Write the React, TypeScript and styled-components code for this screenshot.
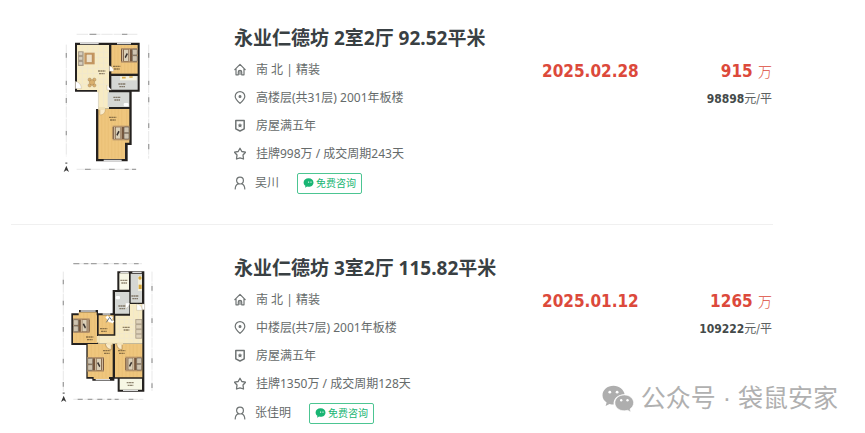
import React from "react";
import styled, { createGlobalStyle } from "styled-components";

const sans = `"Noto Sans", "Noto Sans CJK SC", sans-serif`;
const numeric = `"DejaVu Sans Condensed", "DejaVu Sans", "Noto Sans CJK SC", sans-serif`;

const GlobalStyle = createGlobalStyle`
  * { box-sizing: border-box; }
  body { margin: 0; background: #fff; font-family: ${sans}; color: #666b6b; }
  h2, p, ul { margin: 0; padding: 0; }
`;

const Page = styled.main`
  position: relative;
  padding: 0 92px 0 11px;
`;

const Listing = styled.article`
  display: grid;
  grid-template-columns: 223px minmax(0, 1fr) 110px 121px;
  padding: 20px 0 26px;
  & + & {
    border-top: 1px solid #f0f0f0;
    padding: 25px 0 0;
  }
`;

const PlanLink = styled.a`
  display: block;
  padding-left: 39px;
  svg { display: block; width: 120px; height: 165px; }
`;

const Title = styled.h2`
  margin-top: 4px;
  font-size: 19px;
  line-height: 28px;
  font-weight: 700;
  color: #394043;
  white-space: nowrap;
`;

const Facts = styled.ul`
  list-style: none;
  margin-top: 4px;
`;

const Fact = styled.li`
  display: flex;
  align-items: center;
  gap: 10px;
  height: 28px;
  font-size: 12px;
  line-height: 28px;
  white-space: nowrap;
  svg { flex: none; width: 12px; height: 14px; }
`;

const AgentRow = styled(Fact)`
  height: 30px;
  gap: 9px;
`;

const AskButton = styled.button`
  display: flex;
  align-items: center;
  gap: 2px;
  height: 21px;
  margin-left: 9px;
  padding: 0 5px;
  border: 1px solid #4cc592;
  border-radius: 2px;
  background: #fff;
  color: #18b573;
  font-family: ${sans};
  font-size: 10px;
  line-height: 18px;
  cursor: pointer;
  svg { width: 11px; height: 11px; }
`;

const DealDate = styled.p`
  margin-top: 38px;
  font-family: ${numeric};
  font-size: 17px;
  line-height: 26px;
  font-weight: 700;
  color: #dc493b;
`;

const PriceColumn = styled.div`
  margin-top: 38px;
  padding-right: 1px;
  text-align: right;
  white-space: nowrap;
`;

const Total = styled.p`
  font-family: ${numeric};
  font-size: 17px;
  line-height: 26px;
  font-weight: 700;
  color: #dc493b;
`;

const TotalUnit = styled.span`
  font-family: "Noto Sans CJK SC", sans-serif;
  font-size: 14px;
  font-weight: 300;
`;

const UnitPrice = styled.p`
  margin-top: 4px;
  font-family: ${numeric};
  font-size: 12px;
  line-height: 22px;
  color: #5c6161;
  strong { color: #444a4a; }
`;

const Watermark = styled.div`
  position: absolute;
  right: 27px;
  bottom: 12px;
  display: flex;
  align-items: center;
  gap: 7px;
  color: #b0b0b0;
  font-family: "Liberation Sans", "Noto Sans CJK SC", sans-serif;
  font-size: 25px;
  line-height: 36px;
  white-space: nowrap;
  svg { width: 32px; height: 27px; }
`;

const line = {
  fill: "none",
  stroke: "#6f7474",
  strokeWidth: 1.2,
  strokeLinejoin: "round" as const,
  strokeLinecap: "round" as const,
  "aria-hidden": true,
  viewBox: "0 0 12 14",
};

const HomeIcon = () => (
  <svg {...line}>
    <path d="M.8 6.6 6 1.4l5.200 5.200M2 5.800v6h2.300V9a1.700 1.700 0 0 1 3.400 0v2.800H10v-6M6 8.500v3" />
  </svg>
);
const PinIcon = () => (
  <svg {...line}>
    <path d="M6 12.400C3.200 9.900 1.200 7.800 1.200 5.400a4.800 4.800 0 0 1 9.600 0c0 2.400-2 4.500-4.800 7Z" />
    <circle cx="6" cy="5.400" r=".9" fill="#6f7474" />
  </svg>
);
const ShieldIcon = () => (
  <svg {...line}>
    <path d="M1.800 1.600h8.400v8.200L6 12 1.800 9.800Z" strokeWidth="1.500" />
    <path d="m6 4 .7 1.500 1.700.2-1.200 1.100.3 1.700L6 7.700l-1.500.8.3-1.700-1.200-1.100 1.700-.2Z" fill="#6f7474" stroke="none" />
  </svg>
);
const StarIcon = () => (
  <svg {...line} strokeWidth="1.300">
    <path d="m6 1.300 1.800 3.200 3.700.7L9 8l.5 4L6 10.800 2.500 12 3 8 .5 5.200l3.700-.7Z" />
  </svg>
);
const PersonIcon = () => (
  <svg {...line}>
    <circle cx="6" cy="4.600" r="3.400" />
    <path d="M1.200 13c.1-2.900 1.300-4.500 3.100-5.200M10.800 13c-.1-2.900-1.300-4.500-3.100-5.200" />
  </svg>
);
const ChatIcon = () => (
  <svg viewBox="0 0 11 11" aria-hidden="true">
    <path d="M5.600.2C2.700.2.6 2 .6 4.400c0 1.400.7 2.600 1.800 3.400l-.3 1.900 2-1.100c.5.100 1 .2 1.500.2 2.800 0 4.900-1.900 4.900-4.400S8.400.2 5.600.2Z" fill="#18b573" />
    <circle cx="5.600" cy="4.100" r=".7" fill="#fff" />
    <circle cx="8" cy="4.100" r=".7" fill="#fff" />
  </svg>
);
const WeChatIcon = () => (
  <svg viewBox="0 0 32 27" aria-hidden="true">
    <path d="M11.500.8C5.400.8.5 5 .5 10.300c0 3 1.600 5.600 4.100 7.300l-1 3.500 3.900-2.100c1.300.4 2.700.6 4.200.6-.8-6 4.200-10.300 10.900-10.300C21.800 4.600 17.200.8 11.500.8Z" fill="#aeaeae" />
    <path d="M22.300 9.900c-5.300 0-9.400 3.500-9.400 7.900 0 4.500 4.100 8 9.400 8 1.200 0 2.300-.2 3.300-.5l3.200 1.600-.8-2.900c2.200-1.400 3.600-3.700 3.600-6.200 0-4.400-4.100-7.900-9.300-7.900Z" fill="#aeaeae" stroke="#fff" strokeWidth=".6" />
    <g fill="#fff">
      <circle cx="7.800" cy="7.200" r="1.400" />
      <circle cx="15.100" cy="7.200" r="1.400" />
      <circle cx="19.200" cy="15.200" r="1.200" />
      <circle cx="25.500" cy="15.200" r="1.200" />
    </g>
  </svg>
);

const WALL = "#24211f";
const WOOD = "#efc67d";
const CREAM = "#f7ebc4";
const TILE = "#d5d7d4";

type BedProps = { x: number; y: number; flip?: boolean };
const Bed = ({ x, y, flip }: BedProps) => (
  <g transform={flip ? `translate(${x + 50} ${y}) scale(-1 1)` : `translate(${x} ${y})`}>
    <rect width="50" height="44" fill="#b59269" />
    <rect x="0" y="4" width="34" height="36" fill="#76573d" />
    <path d="M5 4v36M25 4v36" stroke="#ddcbac" strokeWidth="3" />
    <rect x="9" y="5" width="13" height="34" fill="#dcd1b9" />
    <path d="m11 27 6-12 4 3-7 13Z" fill="#37312e" />
    <rect x="34" y="4" width="15" height="17" rx="3" fill="#cfc4b0" stroke="#6a6259" strokeWidth="2" />
    <rect x="34" y="23" width="15" height="17" rx="3" fill="#cfc4b0" stroke="#6a6259" strokeWidth="2" />
  </g>
);

const Label = ({ x, y }: { x: number; y: number }) => (
  <path d={`M${x - 11} ${y - 4}h22M${x - 8} ${y + 4}h17`} stroke="#4d3c25" strokeWidth="4" strokeDasharray="6 1" opacity=".6" />
);

const Compass = () => (
  <g fill="#393939">
    <path d="m49 437 8 19-8-5-8 5Z" />
    <path d="M46 427h6v5h-6Z" opacity=".6" />
  </g>
);

const PlanTwoRooms = () => (
  <svg viewBox="0 0 360 495" role="img" aria-label="户型图">
    <path d="M80 43h184M80 448h180M49 74v335M296 74v342" stroke="#c8c8c8" strokeWidth="2" strokeDasharray="34 3" opacity=".6" />
    <g stroke="#a2a2a2" strokeWidth="4">
      <path d="M119 43h20M216 43h16M105 448h17M177 448h17M224 448h12M246 448h12" />
      <path d="M49 99v14M49 182v13M49 234v15M49 332v14M296 99v14M296 182v13M296 232v15M296 310v14M296 372v16" />
    </g>
    <path d="M75 68h194v147h-24v160h-12v49h-95V267h8v-52H75Z" fill={WALL} />
    <path d="M81 75h96v191h-31v-56H81Z" fill={CREAM} />
    <path d="M184 75h79v86h-79Z" fill={WOOD} />
    <path d="M184 168h79v41h-79ZM173 217h65v44h-65Z" fill={TILE} />
    <path d="M145 267h93v101h-13v49h-80Z" fill={WOOD} />
    <g stroke="#dca958" opacity=".5">
      <path d="M194 76v84M204 76v84M214 76v84M224 76v84M234 76v84M244 76v84M254 76v84M155 268v148M165 268v148M175 268v148M185 268v148M195 268v148M205 268v148M215 268v148M230 268v100" />
    </g>
    <g stroke="#f0e8d1" strokeWidth="3" opacity=".7">
      <path d="M97 80v124M113 80v124M129 80v124M145 80v180M161 80v185M83 97h92M83 113h92M83 129h92M83 145h92M83 161h92M83 177h92M83 193h92" />
    </g>
    <path d="M90 70h56M201 70h42M161 422h54" stroke="#ddd" strokeWidth="5" />
    <rect x="84" y="94" width="17" height="44" fill="#afa08a" />
    <path d="M86 96h12v10H86ZM86 110h12v10H86ZM86 125h12v10H86Z" fill="#d8d0c0" stroke="#82796d" />
    <rect x="103" y="98" width="31" height="35" fill="#c49661" />
    <rect x="109" y="103" width="17" height="24" fill="#eee1c9" stroke="#a7763f" />
    <g fill="#d9b06f" stroke="#927047">
      <circle cx="119" cy="179" r="5" />
      <circle cx="133" cy="179" r="5" />
      <circle cx="119" cy="196" r="5" />
      <circle cx="133" cy="196" r="5" />
      <circle cx="126" cy="187" r="8" />
    </g>
    <Bed x={213} y={84} />
    <Bed x={188} y={317} />
    <Label x={155} y={157} />
    <Label x={200} y={143} />
    <Label x={216} y={196} />
    <Label x={201} y={236} />
    <Label x={188} y={296} />
    <path d="M210 175h50" stroke="#f6f3df" strokeWidth="12" />
    <path d="M216 173h11M238 171h10" stroke="#d7aa46" strokeWidth="5" />
    <rect x="221" y="249" width="15" height="10" rx="4" fill="#fff" />
    <path d="M76 184v22h18q0-18-18-22ZM178 137v17h13q0-13-13-17M171 195v15h14" fill="#fff" stroke="#a99875" />
    <path d="M150 268v17q15 0 16-17" fill="#f9ebca" stroke="#ad874d" />
    <path d="M145 210v7M145 265h20" stroke="#eee0b7" strokeWidth="8" />
    <Compass />
  </svg>
);

const PlanThreeRooms = () => (
  <svg viewBox="0 0 360 495" role="img" aria-label="户型图">
    <path d="M70 41h206M70 448h210M40 65v358M306 65v358" stroke="#c8c8c8" strokeWidth="2" strokeDasharray="30 3" opacity=".6" />
    <g stroke="#a2a2a2" strokeWidth="4">
      <path d="M70 41h18M101 41h14M123 41h17M161 41h14M192 41h14M218 41h12M252 41h14M83 448h15M113 448h14M142 448h15M172 448h12M194 448h12M236 448h14" />
      <path d="M40 89v14M40 152v14M40 231v14M40 326v14M40 396v14M306 108v14M306 205v14M306 325v14M306 400v14" />
    </g>
    <path d="M202 64h81v361h-80v-39h-10v6H127v-6h-18V285H64V190h23v-10h57v10h44v-70h14Z" fill={WALL} />
    <path d="M208 70h29v49h-29ZM209 386h67v33h-67Z" fill="#f7f7e5" />
    <path d="M242 71h34v87h-34ZM195 126h43v65h-43Z" fill={TILE} />
    <path d="M240 162h37v119H144v-24h52v-60h44Z" fill={CREAM} />
    <path d="M69 196h17v-9h54v9h1v83H69ZM146 196h45v57h-45ZM113 282h75v99h-11v6h-46v-6h-18ZM195 282h82v100h-82Z" fill={WOOD} />
    <g stroke="#dca958" opacity=".5">
      <path d="M79 197v82M90 189v90M101 189v90M112 189v90M123 189v90M134 189v90M157 197v55M168 197v55M179 197v55M124 283v97M135 283v101M146 283v101M157 283v101M168 283v101M179 283v97M206 283v98M217 283v98M228 283v98M239 283v98M250 283v98M261 283v98M272 283v98" />
    </g>
    <g stroke="#f0e8d1" strokeWidth="3" opacity=".7">
      <path d="M209 198v80M223 198v80M237 198v80M251 165v113M265 165v113M198 209h78M198 223h78M198 237h78M198 251h78M146 265h130" />
    </g>
    <path d="M211 67h25M247 67h28M92 183h45M158 192h23M137 389h43M219 421h45" stroke="#ddd" strokeWidth="4" />
    <Bed x={69} y={205} flip />
    <Bed x={112} y={321} flip />
    <Bed x={226} y={320} />
    <path d="M169 200 190 217M177 216l8-17" stroke="#fff" strokeWidth="9" />
    <path d="m169 217 10-15 8 11" fill="none" stroke="#697783" strokeWidth="3" />
    <rect x="256" y="207" width="20" height="59" fill="#bcae94" />
    <path d="M258 209h17v12h-17ZM258 224h17v12h-17ZM258 239h17v12h-17ZM258 253h17v11h-17Z" fill="#ded2ba" stroke="#938875" />
    <path d="M264 79h12v44h-12Z" fill="#f2eedb" />
    <circle cx="270" cy="84" r="5" fill="#d4a63b" />
    <path d="M266 104h9v13h-9Z" fill="#d4a63b" />
    <rect x="197" y="138" width="13" height="10" rx="4" fill="#fff" />
    <path d="M260 162v19h17q0-16-17-19M276 162h8v17h-8ZM226 160v15q10-1 13-15" fill="#fff" stroke="#afa284" />
    <path d="M146 257v24M166 281q2 16 18 18v-18M200 281q1 17 16 18v-18" fill="#f9ebca" stroke="#ad874d" strokeWidth="2" />
    <path d="M144 258v20M171 281h16M202 281h17" stroke="#f2e2b7" strokeWidth="7" />
    <Label x={222} y={95} />
    <Label x={255} y={142} />
    <Label x={216} y={172} />
    <Label x={229} y={236} />
    <Label x={119} y={265} />
    <Label x={161} y={240} />
    <Label x={170} y={306} />
    <Label x={215} y={306} />
    <Label x={241} y={402} />
    <g transform="translate(-8 0)"><Compass /></g>
  </svg>
);

type Deal = {
  title: string;
  plan: React.ReactNode;
  floor: string;
  cycle: string;
  agent: string;
  date: string;
  total: string;
  unit: string;
};

const deals: Deal[] = [
  {
    title: "永业仁德坊 2室2厅 92.52平米",
    plan: <PlanTwoRooms />,
    floor: "高楼层(共31层) 2001年板楼",
    cycle: "挂牌998万 / 成交周期243天",
    agent: "吴川",
    date: "2025.02.28",
    total: "915",
    unit: "98898",
  },
  {
    title: "永业仁德坊 3室2厅 115.82平米",
    plan: <PlanThreeRooms />,
    floor: "中楼层(共7层) 2001年板楼",
    cycle: "挂牌1350万 / 成交周期128天",
    agent: "张佳明",
    date: "2025.01.12",
    total: "1265",
    unit: "109222",
  },
];

export default function App() {
  return (
    <>
      <GlobalStyle />
      <Page>
        {deals.map((deal) => (
          <Listing key={deal.title}>
            <PlanLink href="#">{deal.plan}</PlanLink>
            <div>
              <Title>{deal.title}</Title>
              <Facts>
                <Fact><HomeIcon />南 北 | 精装</Fact>
                <Fact><PinIcon />{deal.floor}</Fact>
                <Fact><ShieldIcon />房屋满五年</Fact>
                <Fact><StarIcon />{deal.cycle}</Fact>
                <AgentRow>
                  <PersonIcon />
                  {deal.agent}
                  <AskButton type="button"><ChatIcon />免费咨询</AskButton>
                </AgentRow>
              </Facts>
            </div>
            <DealDate>{deal.date}</DealDate>
            <PriceColumn>
              <Total>{deal.total} <TotalUnit>万</TotalUnit></Total>
              <UnitPrice><strong>{deal.unit}</strong>元/平</UnitPrice>
            </PriceColumn>
          </Listing>
        ))}
        <Watermark>
          <WeChatIcon />
          <span>公众号 · 袋鼠安家</span>
        </Watermark>
      </Page>
    </>
  );
}
